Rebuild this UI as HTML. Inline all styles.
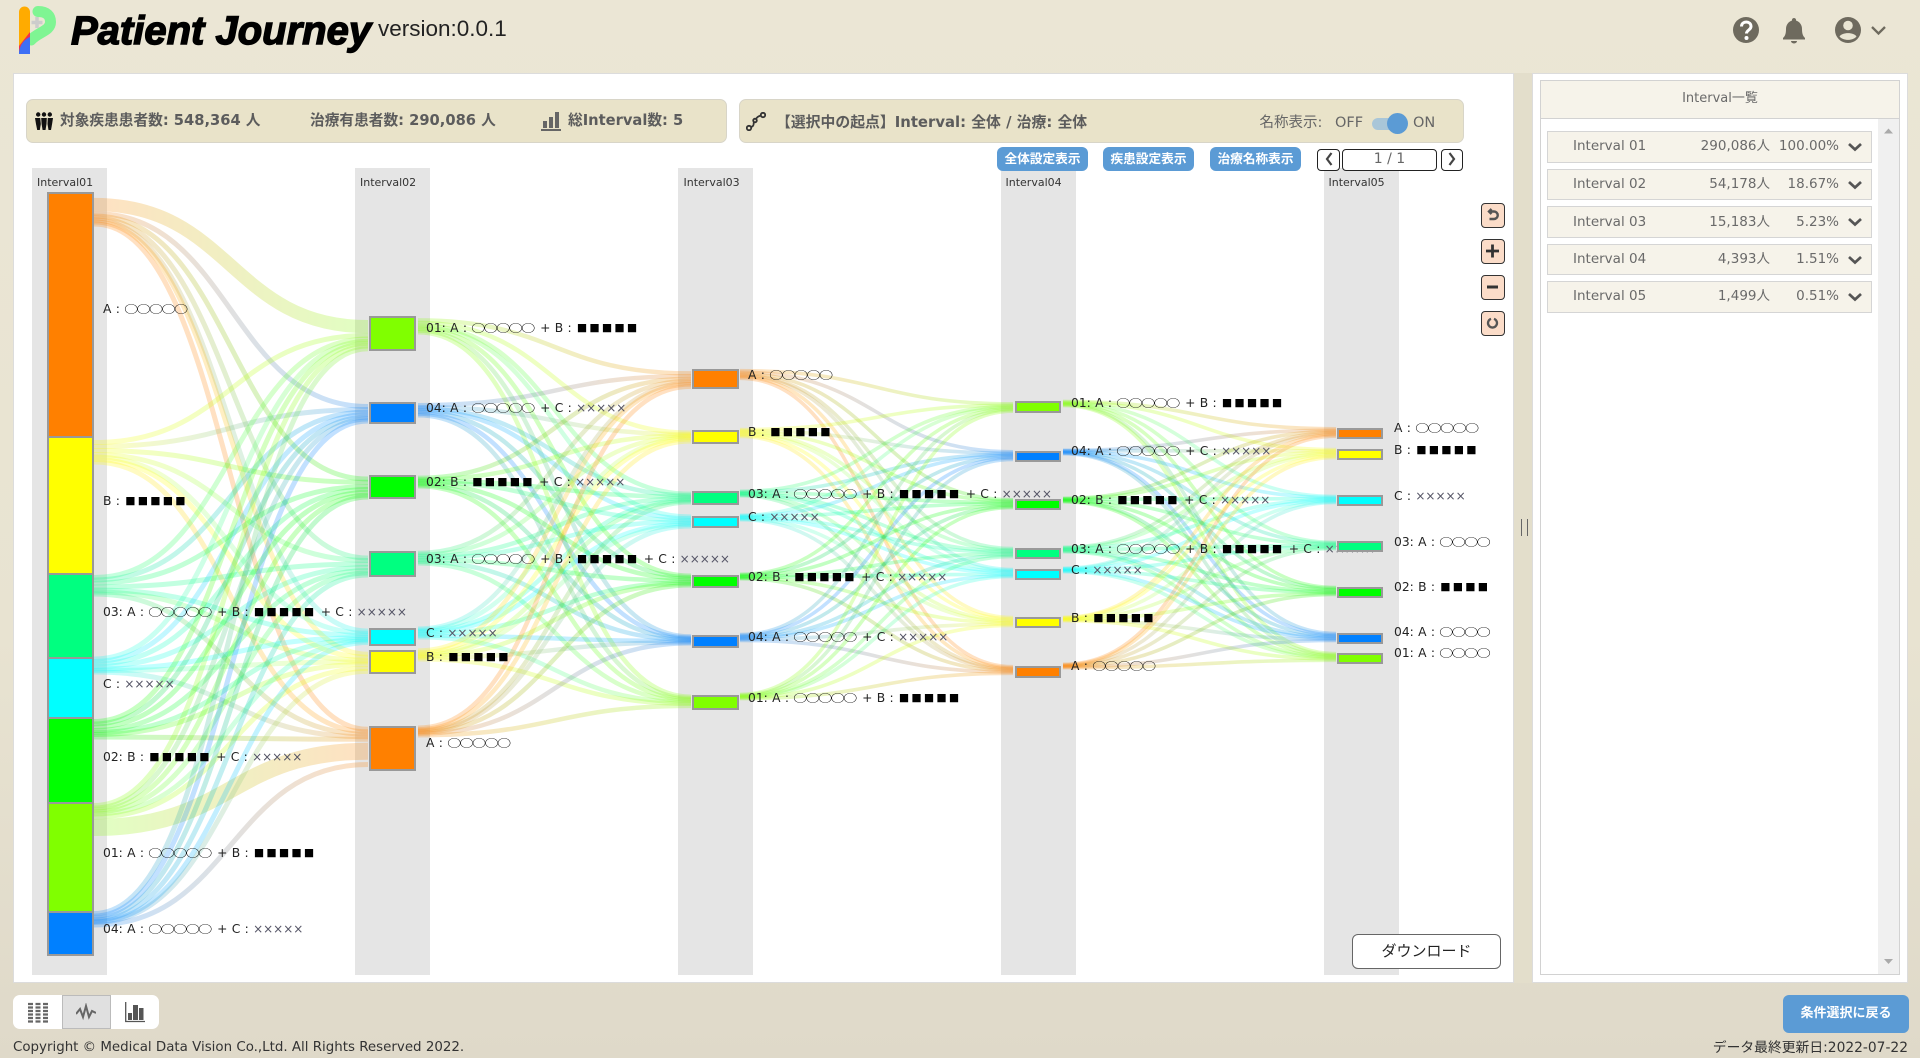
<!DOCTYPE html>
<html lang="ja"><head><meta charset="utf-8"><title>Patient Journey</title>
<style>
*{box-sizing:border-box}
html,body{margin:0;padding:0;width:1920px;height:1058px;overflow:hidden}
body{position:relative;background:linear-gradient(#ebe6d5,#e8e3d1 60%,#dfd9c9);font-family:"DejaVu Sans","Noto Sans CJK JP",sans-serif;color:#333}
.a{position:absolute}
.j{font-family:"Noto Sans CJK JP",sans-serif}
.bar{background:#e9e3c9;border:1px solid #d8d5c8;border-radius:7px;height:44px;top:99px}
.bt{font-weight:bold;font-size:14.7px;color:#5c5c5c;white-space:nowrap;line-height:20px;top:111px}
.col{background:#e5e5e5;width:75px;top:168px;height:807px}
.hd{font-size:11px;top:176px;line-height:14px;color:#333;white-space:nowrap}
.n{border:2px solid #999;width:47px;z-index:3}
.l{font-size:12.3px;line-height:16px;white-space:nowrap;color:#222;z-index:2;word-spacing:.4px}
.l i{font-family:"Noto Sans CJK JP",sans-serif;font-style:normal;font-size:14px;letter-spacing:-1.5px;margin-right:2px;line-height:16px;height:16px;display:inline-block;vertical-align:top;transform:translateY(.5px) scaleY(.74);color:#000}
.l b{font-family:"Noto Sans CJK JP",sans-serif;font-weight:normal;font-size:10.3px;letter-spacing:2.2px;margin-left:1px;color:#000;line-height:1px}
.l u{text-decoration:none;font-size:12px;color:#556;line-height:1px}
.btn{background:#5b9bd5;color:#fff;font-weight:bold;font-size:12.7px;border-radius:6px;height:24px;line-height:24px;text-align:center;top:147px;width:91px;white-space:nowrap;z-index:4}
.pg{border:1.5px solid #222;border-radius:4px;top:149px;height:22px;background:#fff;text-align:center;line-height:19px;color:#666;font-size:14px;z-index:4}
.tool{left:1481px;width:24px;height:25px;background:#fbdcc8;border:1.5px solid #333;border-radius:4px;z-index:4}
.row{left:1547px;width:325px;background:#f6f3ea;border:1.5px solid #d5d5d5;font-size:13.5px;color:#6a6a6a;line-height:28px}
.row span{position:absolute;white-space:nowrap}
.row .nm{left:25px}.row .ct{right:101px}.row .pc{right:32px}
.row svg{position:absolute;left:299px;top:10px}
</style></head><body>

<svg class="a" style="left:19px;top:6px" width="38" height="48" viewBox="19 6 38 48">
<path d="M19 12a5.500 5.500 0 0 1 11 0V54H19Z" fill="#ffab00"/>
<path d="M38 11.500C47 11.500 50.500 16 50.500 22C50.500 31 38 32 31 40" fill="none" stroke="#7ff593" stroke-width="11" stroke-linecap="round"/>
<path d="M19 46L30 32V54H19Z" fill="#f2304a"/>
<path d="M19 52C20 44 25 39 30 37V54H19Z" fill="#3e6ff5"/>
<path d="M37 17v11M31.500 22.500h11" stroke="#ccc" stroke-width="3.500"/>
</svg>
<div class="a" style="left:71px;top:8px;font:italic bold 40px/46px 'Liberation Sans',sans-serif;color:#000;-webkit-text-stroke:1.400px #000;white-space:nowrap">Patient Journey</div>
<div class="a" style="left:378px;top:15px;font:22.500px/28px 'Liberation Sans',sans-serif;color:#222;white-space:nowrap">version:0.0.1</div>

<svg class="a" style="left:1730px;top:14px" width="170" height="32" viewBox="1730 14 170 32">
<circle cx="1746" cy="30" r="13" fill="#6e6a5e"/>
<path d="M1741.500 26.500C1741.500 20.500 1751 20.500 1751 26.500C1751 30 1746.500 30 1746.500 33.500" fill="none" stroke="#fff" stroke-width="3"/>
<circle cx="1746.500" cy="38" r="2" fill="#fff"/>
<path d="M1794 18a2 2 0 0 1 2 2.500C1800 22 1802 25 1802 29C1802 34 1803 36 1805 38V39.500H1783V38C1785 36 1786 34 1786 29C1786 25 1788 22 1792 20.500A2 2 0 0 1 1794 18Z" fill="#6e6a5e"/>
<path d="M1791 41h6a3 2.500 0 0 1-6 0Z" fill="#6e6a5e"/>
<circle cx="1848" cy="30" r="13" fill="#6e6a5e"/>
<circle cx="1848" cy="25.500" r="4.800" fill="#e9e5d3"/>
<path d="M1839.500 36.500C1842 32 1854 32 1856.500 36.500C1853 41 1843 41 1839.500 36.500Z" fill="#e9e5d3"/>
<path d="M1872 27l6.500 6.500 6.500-6.500" fill="none" stroke="#6e6a5e" stroke-width="2.300"/>
</svg>

<div class="a" style="left:13px;top:73px;width:1501px;height:910px;background:#fff;border:1px solid #dcdcdc"></div>
<div class="a" style="left:1514px;top:73px;width:18px;height:910px;background:#e3decb"></div>
<div class="a" style="left:1520.500px;top:519px;width:7px;height:17px;border-left:1.500px solid #666;border-right:1.500px solid #666"></div>
<div class="a" style="left:1532px;top:73px;width:376px;height:910px;background:#fff;border:1px solid #dcdcdc"></div>

<div class="a bar" style="left:26px;width:701px"></div>
<div class="a bar" style="left:739px;width:725px"></div>
<svg class="a" style="left:35px;top:112px" width="18" height="18" viewBox="0 0 18 18" fill="#111">
<circle cx="3.200" cy="2.500" r="2.200"/><circle cx="9" cy="2.500" r="2.200"/><circle cx="14.800" cy="2.500" r="2.200"/>
<path d="M0 6h5.200l.6 6-1 6H2.200L1 12Z"/><path d="M6.200 6h5.600l-.3 6-1 6H7.600l-1-6Z"/><path d="M12.800 6H18l-.9 6-1.100 6h-2.500l-1-6Z"/>
</svg>
<div class="a bt" style="left:60px">対象疾患患者数: 548,364 人</div>
<div class="a bt" style="left:310px">治療有患者数: 290,086 人</div>
<svg class="a" style="left:541px;top:112px" width="20" height="19" viewBox="0 0 20 19" fill="#666">
<rect x="2" y="9" width="4" height="7"/><rect x="8" y="5" width="4" height="11"/><rect x="14" y="0" width="4" height="16"/><rect x="0" y="17" width="20" height="2"/>
</svg>
<div class="a bt" style="left:568px">総Interval数: 5</div>
<svg class="a" style="left:746px;top:112px" width="20" height="19" viewBox="0 0 20 19" fill="none" stroke="#333" stroke-width="1.800">
<circle cx="3" cy="16" r="2.200"/><circle cx="9" cy="8.500" r="1.800"/><circle cx="17" cy="3" r="2.200"/>
<path d="M5 15C9 14 7 11 8 10M10 7C11 5 13 4 15 3.500"/>
</svg>
<div class="a bt" style="left:776px;font-size:14.850px;top:112px">【選択中の起点】Interval: 全体 / 治療: 全体</div>
<div class="a" style="left:1259.500px;top:113px;font-size:14.500px;line-height:20px;color:#666;white-space:nowrap">名称表示:</div>
<div class="a" style="left:1335px;top:113px;font-size:14.500px;line-height:20px;color:#666">OFF</div>
<div class="a" style="left:1372px;top:118px;width:28px;height:12px;border-radius:6px;background:#a9c6d8"></div>
<div class="a" style="left:1387px;top:113px;width:21px;height:21px;border-radius:50%;background:#5b9bd5"></div>
<div class="a" style="left:1413px;top:113px;font-size:14.500px;line-height:20px;color:#666">ON</div>

<div class="a col" style="left:32px"></div><div class="a col" style="left:355px"></div><div class="a col" style="left:678px"></div><div class="a col" style="left:1001px"></div><div class="a col" style="left:1324px"></div>
<div class="a hd" style="left:37px">Interval01</div><div class="a hd" style="left:360px">Interval02</div><div class="a hd" style="left:683.500px">Interval03</div><div class="a hd" style="left:1005.500px">Interval04</div><div class="a hd" style="left:1328.500px">Interval05</div>

<div class="a btn" style="left:997px">全体設定表示</div><div class="a btn" style="left:1103px">疾患設定表示</div><div class="a btn" style="left:1210px">治療名称表示</div>
<div class="a pg" style="left:1317px;width:23px"><svg width="12" height="18" viewBox="0 0 12 18"><path d="M8.500 3L4 9l4.500 6" fill="none" stroke="#444" stroke-width="2.200"/></svg></div>
<div class="a pg" style="left:1342px;width:95px">1 / 1</div>
<div class="a pg" style="left:1441px;width:22px"><svg width="12" height="18" viewBox="0 0 12 18"><path d="M3.500 3L8 9l-4.500 6" fill="none" stroke="#444" stroke-width="2.200"/></svg></div>

<svg id="links" class="a" style="left:0;top:0;z-index:1" width="1920" height="1058"></svg>

<div class="a tool" style="top:203px"><svg width="21" height="22"><path d="M7.500 7.500h4.500a3.500 3.500 0 0 1 0 7.500H7.500M9.500 5L7 7.500l2.500 2.500" fill="none" stroke="#555" stroke-width="2.400"/></svg></div>
<div class="a tool" style="top:239px"><svg width="21" height="22"><path d="M10.500 4.500v13M4 11h13" stroke="#333" stroke-width="2.800"/></svg></div>
<div class="a tool" style="top:275px"><svg width="21" height="22"><path d="M5 11h11" stroke="#333" stroke-width="3"/></svg></div>
<div class="a tool" style="top:311px"><svg width="21" height="22"><path d="M9 6.800A4.500 4.500 0 1 0 12 6.800" fill="none" stroke="#555" stroke-width="2.300"/></svg></div>

<!-- nodes col 1 -->
<div class="a n" style="left:47px;top:192px;height:246px;background:#ff8000"></div>
<div class="a n" style="left:47px;top:436px;height:139px;background:#ff0"></div>
<div class="a n" style="left:47px;top:573px;height:86px;background:#00ff80"></div>
<div class="a n" style="left:47px;top:657px;height:62px;background:#0ff"></div>
<div class="a n" style="left:47px;top:717px;height:87px;background:#0f0"></div>
<div class="a n" style="left:47px;top:802px;height:111px;background:#80ff00"></div>
<div class="a n" style="left:47px;top:911px;height:45px;background:#0080ff"></div>
<!-- col 2 -->
<div class="a n" style="left:369px;top:316px;height:35px;background:#80ff00"></div>
<div class="a n" style="left:369px;top:402px;height:22px;background:#0080ff"></div>
<div class="a n" style="left:369px;top:475px;height:24px;background:#0f0"></div>
<div class="a n" style="left:369px;top:551px;height:26px;background:#00ff80"></div>
<div class="a n" style="left:369px;top:628px;height:18px;background:#0ff"></div>
<div class="a n" style="left:369px;top:650px;height:24px;background:#ff0"></div>
<div class="a n" style="left:369px;top:726px;height:45px;background:#ff8000"></div>
<!-- col 3 -->
<div class="a n" style="left:692px;top:369px;height:20px;background:#ff8000"></div>
<div class="a n" style="left:692px;top:430px;height:14px;background:#ff0"></div>
<div class="a n" style="left:692px;top:491px;height:14px;background:#00ff80"></div>
<div class="a n" style="left:692px;top:516px;height:12px;background:#0ff"></div>
<div class="a n" style="left:692px;top:575px;height:13px;background:#0f0"></div>
<div class="a n" style="left:692px;top:635px;height:13px;background:#0080ff"></div>
<div class="a n" style="left:692px;top:695px;height:15px;background:#80ff00"></div>
<!-- col 4 -->
<div class="a n" style="left:1015px;top:401px;height:12px;background:#80ff00;width:46px"></div>
<div class="a n" style="left:1015px;top:451px;height:11px;background:#0080ff;width:46px"></div>
<div class="a n" style="left:1015px;top:499px;height:11px;background:#0f0;width:46px"></div>
<div class="a n" style="left:1015px;top:548px;height:11px;background:#00ff80;width:46px"></div>
<div class="a n" style="left:1015px;top:569px;height:11px;background:#0ff;width:46px"></div>
<div class="a n" style="left:1015px;top:617px;height:11px;background:#ff0;width:46px"></div>
<div class="a n" style="left:1015px;top:666px;height:12px;background:#ff8000;width:46px"></div>
<!-- col 5 -->
<div class="a n" style="left:1337px;top:428px;height:11px;background:#ff8000;width:46px"></div>
<div class="a n" style="left:1337px;top:449px;height:11px;background:#ff0;width:46px"></div>
<div class="a n" style="left:1337px;top:495px;height:11px;background:#0ff;width:46px"></div>
<div class="a n" style="left:1337px;top:541px;height:11px;background:#00ff80;width:46px"></div>
<div class="a n" style="left:1337px;top:587px;height:11px;background:#0f0;width:46px"></div>
<div class="a n" style="left:1337px;top:633px;height:11px;background:#0080ff;width:46px"></div>
<div class="a n" style="left:1337px;top:653px;height:11px;background:#80ff00;width:46px"></div>

<!-- labels col 1 -->
<div class="a l" style="left:103px;top:301px">A : <i>○○○○○</i></div>
<div class="a l" style="left:103px;top:493px">B : <b>■■■■■</b></div>
<div class="a l" style="left:103px;top:604px">03: A : <i>○○○○○</i> + B : <b>■■■■■</b> + C : <u>×××××</u></div>
<div class="a l" style="left:103px;top:676px">C : <u>×××××</u></div>
<div class="a l" style="left:103px;top:749px">02: B : <b>■■■■■</b> + C : <u>×××××</u></div>
<div class="a l" style="left:103px;top:845px">01: A : <i>○○○○○</i> + B : <b>■■■■■</b></div>
<div class="a l" style="left:103px;top:921px">04: A : <i>○○○○○</i> + C : <u>×××××</u></div>
<!-- col 2 -->
<div class="a l" style="left:426px;top:320px">01: A : <i>○○○○○</i> + B : <b>■■■■■</b></div>
<div class="a l" style="left:426px;top:400px">04: A : <i>○○○○○</i> + C : <u>×××××</u></div>
<div class="a l" style="left:426px;top:474px">02: B : <b>■■■■■</b> + C : <u>×××××</u></div>
<div class="a l" style="left:426px;top:551px">03: A : <i>○○○○○</i> + B : <b>■■■■■</b> + C : <u>×××××</u></div>
<div class="a l" style="left:426px;top:625px">C : <u>×××××</u></div>
<div class="a l" style="left:426px;top:649px">B : <b>■■■■■</b></div>
<div class="a l" style="left:426px;top:735px">A : <i>○○○○○</i></div>
<!-- col 3 -->
<div class="a l" style="left:748px;top:367px">A : <i>○○○○○</i></div>
<div class="a l" style="left:748px;top:424px">B : <b>■■■■■</b></div>
<div class="a l" style="left:748px;top:486px">03: A : <i>○○○○○</i> + B : <b>■■■■■</b> + C : <u>×××××</u></div>
<div class="a l" style="left:748px;top:509px">C : <u>×××××</u></div>
<div class="a l" style="left:748px;top:569px">02: B : <b>■■■■■</b> + C : <u>×××××</u></div>
<div class="a l" style="left:748px;top:629px">04: A : <i>○○○○○</i> + C : <u>×××××</u></div>
<div class="a l" style="left:748px;top:690px">01: A : <i>○○○○○</i> + B : <b>■■■■■</b></div>
<!-- col 4 -->
<div class="a l" style="left:1071px;top:395px">01: A : <i>○○○○○</i> + B : <b>■■■■■</b></div>
<div class="a l" style="left:1071px;top:443px">04: A : <i>○○○○○</i> + C : <u>×××××</u></div>
<div class="a l" style="left:1071px;top:492px">02: B : <b>■■■■■</b> + C : <u>×××××</u></div>
<div class="a l" style="left:1071px;top:541px">03: A : <i>○○○○○</i> + B : <b>■■■■■</b> + C : <u>×××××</u></div>
<div class="a l" style="left:1071px;top:562px">C : <u>×××××</u></div>
<div class="a l" style="left:1071px;top:610px">B : <b>■■■■■</b></div>
<div class="a l" style="left:1071px;top:658px">A : <i>○○○○○</i></div>
<!-- col 5 -->
<div class="a l" style="left:1394px;top:420px">A : <i>○○○○○</i></div>
<div class="a l" style="left:1394px;top:442px">B : <b>■■■■■</b></div>
<div class="a l" style="left:1394px;top:488px">C : <u>×××××</u></div>
<div class="a l" style="left:1394px;top:534px">03: A : <i>○○○○</i></div>
<div class="a l" style="left:1394px;top:579px">02: B : <b>■■■■</b></div>
<div class="a l" style="left:1394px;top:624px">04: A : <i>○○○○</i></div>
<div class="a l" style="left:1394px;top:645px">01: A : <i>○○○○</i></div>

<div class="a" style="left:1352px;top:934px;width:149px;height:35px;background:#fff;border:1px solid #666;border-radius:6px;text-align:center;line-height:32px;font-size:15px;color:#222;z-index:4" >ダウンロード</div>

<!-- right panel -->
<div class="a" style="left:1540px;top:80px;width:360px;height:895px;border:1px solid #d2d2d2;background:#fff"></div>
<div class="a" style="left:1541px;top:81px;width:358px;height:38px;background:#f6f3ea;border-bottom:1px solid #d2d2d2;text-align:center;line-height:35px;font-size:13px;color:#6a6a6a">Interval一覧</div>
<div class="a" style="left:1878px;top:119px;width:21px;height:855px;background:#f0f0f0"></div>
<svg class="a" style="left:1878px;top:125px" width="21" height="10"><path d="M6 8.500L10.500 3.500L15 8.500Z" fill="#aaa"/></svg>
<svg class="a" style="left:1878px;top:957px" width="21" height="10"><path d="M6 2L10.500 7L15 2Z" fill="#aaa"/></svg>
<div class="a row" style="top:131px;height:32px"><span class="nm">Interval 01</span><span class="ct">290,086人</span><span class="pc">100.00%</span><svg width="16" height="10"><path d="M2 2l6 5.500L14 2" fill="none" stroke="#555" stroke-width="2.700"/></svg></div>
<div class="a row" style="top:169px;height:31px"><span class="nm">Interval 02</span><span class="ct">54,178人</span><span class="pc">18.67%</span><svg width="16" height="10"><path d="M2 2l6 5.500L14 2" fill="none" stroke="#555" stroke-width="2.700"/></svg></div>
<div class="a row" style="top:206px;height:32px;line-height:30px"><span class="nm">Interval 03</span><span class="ct">15,183人</span><span class="pc">5.23%</span><svg width="16" height="10"><path d="M2 2l6 5.500L14 2" fill="none" stroke="#555" stroke-width="2.700"/></svg></div>
<div class="a row" style="top:244px;height:31px"><span class="nm">Interval 04</span><span class="ct">4,393人</span><span class="pc">1.51%</span><svg width="16" height="10"><path d="M2 2l6 5.500L14 2" fill="none" stroke="#555" stroke-width="2.700"/></svg></div>
<div class="a row" style="top:281px;height:32px"><span class="nm">Interval 05</span><span class="ct">1,499人</span><span class="pc">0.51%</span><svg width="16" height="10"><path d="M2 2l6 5.500L14 2" fill="none" stroke="#555" stroke-width="2.700"/></svg></div>

<!-- footer -->
<div class="a" style="left:13px;top:995px;width:146px;height:34px;background:#fff;border-radius:7px"></div>
<div class="a" style="left:62px;top:995px;width:49px;height:34px;background:#e0e0e0;border:1px solid #bbb"></div>
<svg class="a" style="left:28px;top:1002px" width="20" height="21" fill="#666">
<path d="M0 2h5M7.500 2h5M15 2h5M0 5.500h5M7.500 5.500h5M15 5.500h5M0 9h5M7.500 9h5M15 9h5M0 12.500h5M7.500 12.500h5M15 12.500h5M0 16h5M7.500 16h5M15 16h5M0 19.500h5M7.500 19.500h5M15 19.500h5" stroke="#666" stroke-width="2.200"/>
</svg>
<svg class="a" style="left:76px;top:1003px" width="20" height="19"><path d="M0 11L4 6L7 14L10 3L13 14L16 8L20 10" fill="none" stroke="#666" stroke-width="2"/></svg>
<svg class="a" style="left:125px;top:1002px" width="20" height="21" fill="#555"><rect x="3" y="11" width="4" height="7"/><rect x="8" y="3" width="5" height="15"/><rect x="14" y="6" width="4.500" height="12"/><path d="M.7 0V19.500H20" fill="none" stroke="#555" stroke-width="1.300"/></svg>
<div class="a" style="left:13px;top:1040px;font-size:13.400px;line-height:16px;color:#333;white-space:nowrap">Copyright © Medical Data Vision Co.,Ltd. All Rights Reserved 2022.</div>
<div class="a" style="left:1783px;top:995px;width:126px;height:38px;background:#5b9bd5;border-radius:6px;color:#fff;font-weight:bold;font-size:13px;line-height:37px;text-align:center;white-space:nowrap">条件選択に戻る</div>
<div class="a" style="right:12px;top:1040px;font-size:13.800px;line-height:16px;color:#333;white-space:nowrap">データ最終更新日:2022-07-22</div>

<script>
(function(){
var C={o:'#ff8000',y:'#ffff00',s:'#00ff80',c:'#00ffff',g:'#00ff00',b:'#0080ff',h:'#80ff00'};
var P=[
{x0:94,x1:368,m:5,
 S:[['o',197,225],['y',440,463],['s',576,595],['c',658,673],['g',720,738],['h',804,836],['b',912,927]],
 T:[['h',320,350],['b',405,422],['g',478,498],['s',557,576],['c',630,643],['y',653,672],['o',728,767]],
 W:[[15,3,2,2,2,2,2],[5,3,5,3,2,3,2],[3,2,4,4,2,2,2],[2,3,2,3,2,1,2],[3,2,4,3,1,3,2],[3,2,2,2,2,4,17],[3,2,2,2,1,1,4]]},
{x0:418,x1:691,m:4.5,
 S:[['h',319,333],['b',404,416],['g',477,487],['s',552,564],['c',628,638],['y',650,660],['o',727,736]],
 T:[['o',372,388],['y',432,442],['s',493,503],['c',516,527],['g',575,586],['b',636,644],['h',696,707]],
 W:[[5,4,4,3,3,3,3],[5,3,3,4,3,4,3],[4,3,3,3,4,3,3],[4,3,4,3,4,3,3],[3,3,3,4,3,4,3],[3,5,3,3,3,3,4],[5,4,3,3,3,4,5]]},
{x0:740,x1:1013,m:3.6,
 S:[['o',370,379],['y',429,437],['s',491,496],['c',515,520],['g',574,579],['b',634,641],['h',694,699]],
 T:[['h',403,412],['b',451,460],['g',499,508],['s',548,557],['c',569,577],['y',617,626],['o',666,674]],
 W:[[4,4,4,3,3,3,4],[3,3,3,3,3,4,3],[3,3,4,3,3,3,3],[3,3,3,3,4,3,3],[3,3,4,3,3,3,3],[3,4,3,3,3,3,4],[4,3,3,3,3,3,4]]},
{x0:1063,x1:1336,m:3.6,
 S:[['h',401,406],['b',450,454],['g',498,502],['s',547,552],['c',568,572],['y',617,621],['o',664,668]],
 T:[['o',428,437],['y',449,458],['c',496,503],['s',542,549],['g',587,595],['b',633,641],['h',653,661]],
 W:[[4,3,3,3,3,3,4],[3,3,4,3,3,4,3],[3,3,3,3,4,3,3],[3,3,3,4,3,3,3],[3,3,4,3,3,4,3],[3,4,3,3,3,3,4],[4,3,3,3,3,3,4]]}
];
var defs='',paths='',id=0;
P.forEach(function(p){
 var n=p.S.length,rs=[],cs=[],i,j;
 for(i=0;i<n;i++){rs[i]=0;for(j=0;j<n;j++)rs[i]+=p.W[i][j];}
 for(j=0;j<n;j++){cs[j]=0;for(i=0;i<n;i++)cs[j]+=p.W[i][j];}
 var tc=[];for(j=0;j<n;j++)tc[j]=0;
 for(i=0;i<n;i++){
  var sc=0,ks=(p.S[i][2]-p.S[i][1])/rs[i];
  for(j=0;j<n;j++){
   var w=p.W[i][j],kt=(p.T[j][2]-p.T[j][1])/cs[j];
   var y0=p.S[i][1]+(sc+w/2)*ks, y1=p.T[j][1]+(tc[j]+w/2)*kt;
   sc+=w;tc[j]+=w;
   var g='g'+(id++),mx=(p.x0+p.x1)/2;
   defs+='<linearGradient id="'+g+'" gradientUnits="userSpaceOnUse" x1="'+p.x0+'" x2="'+p.x1+'" y1="0" y2="0"><stop offset="0" stop-color="'+C[p.S[i][0]]+'"/><stop offset="1" stop-color="'+C[p.T[j][0]]+'"/></linearGradient>';
   paths+='<path d="M'+p.x0+' '+y0.toFixed(1)+'C'+mx+' '+y0.toFixed(1)+' '+mx+' '+y1.toFixed(1)+' '+p.x1+' '+y1.toFixed(1)+'" fill="none" stroke="url(#'+g+')" stroke-opacity=".24" stroke-width="'+Math.max(w*Math.min(ks,kt,1.1),p.m).toFixed(1)+'"/>';
  }
 }
});
document.getElementById('links').innerHTML='<defs>'+defs+'</defs>'+paths;
})();
</script>
</body></html>
